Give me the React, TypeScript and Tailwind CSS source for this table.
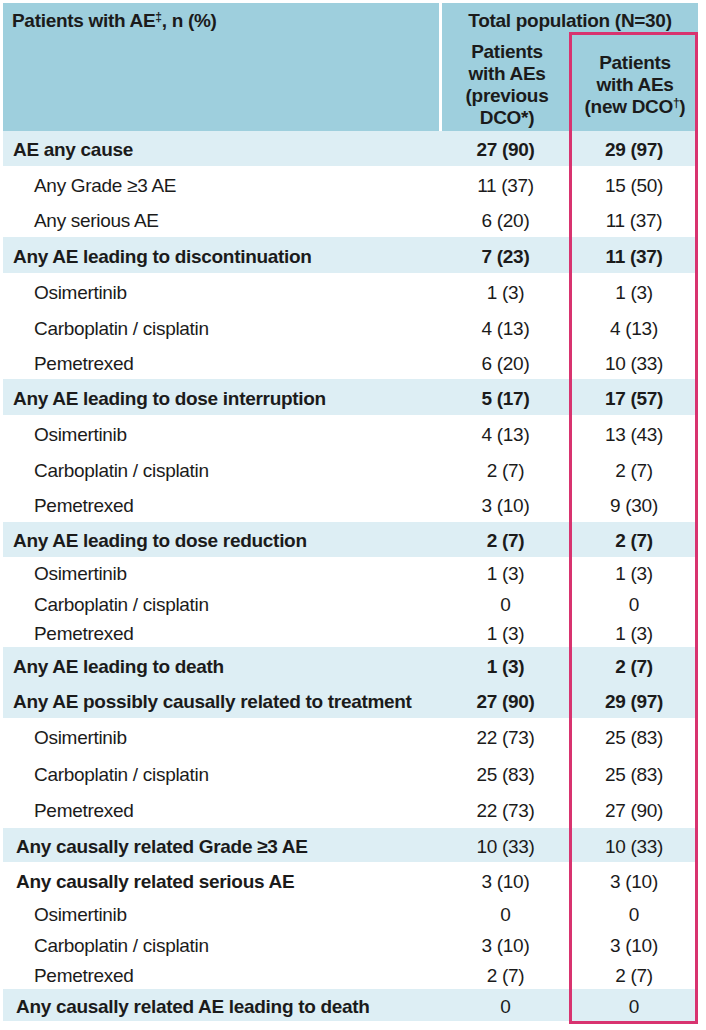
import React from "react";

type Row = {
  label: string;
  prev: string;
  next: string;
  h: number;
  kind: "main" | "causal" | "sub";
  band?: boolean;
  boldNums?: boolean;
};

const rows: Row[] = [
  { label: "AE any cause", prev: "27 (90)", next: "29 (97)", h: 35, kind: "main", band: true, boldNums: true },
  { label: "Any Grade ≥3 AE", prev: "11 (37)", next: "15 (50)", h: 36, kind: "sub" },
  { label: "Any serious AE", prev: "6 (20)", next: "11 (37)", h: 35, kind: "sub" },
  { label: "Any AE leading to discontinuation", prev: "7 (23)", next: "11 (37)", h: 36, kind: "main", band: true, boldNums: true },
  { label: "Osimertinib", prev: "1 (3)", next: "1 (3)", h: 37, kind: "sub" },
  { label: "Carboplatin / cisplatin", prev: "4 (13)", next: "4 (13)", h: 35, kind: "sub" },
  { label: "Pemetrexed", prev: "6 (20)", next: "10 (33)", h: 34, kind: "sub" },
  { label: "Any AE leading to dose interruption", prev: "5 (17)", next: "17 (57)", h: 36, kind: "main", band: true, boldNums: true },
  { label: "Osimertinib", prev: "4 (13)", next: "13 (43)", h: 37, kind: "sub" },
  { label: "Carboplatin / cisplatin", prev: "2 (7)", next: "2 (7)", h: 35, kind: "sub" },
  { label: "Pemetrexed", prev: "3 (10)", next: "9 (30)", h: 35, kind: "sub" },
  { label: "Any AE leading to dose reduction", prev: "2 (7)", next: "2 (7)", h: 35, kind: "main", band: true, boldNums: true },
  { label: "Osimertinib", prev: "1 (3)", next: "1 (3)", h: 31, kind: "sub" },
  { label: "Carboplatin / cisplatin", prev: "0", next: "0", h: 30, kind: "sub" },
  { label: "Pemetrexed", prev: "1 (3)", next: "1 (3)", h: 29, kind: "sub" },
  { label: "Any AE leading to death", prev: "1 (3)", next: "2 (7)", h: 36, kind: "main", band: true, boldNums: true },
  { label: "Any AE possibly causally related to treatment", prev: "27 (90)", next: "29 (97)", h: 35, kind: "main", band: true, boldNums: true },
  { label: "Osimertinib", prev: "22 (73)", next: "25 (83)", h: 37, kind: "sub" },
  { label: "Carboplatin / cisplatin", prev: "25 (83)", next: "25 (83)", h: 36, kind: "sub" },
  { label: "Pemetrexed", prev: "22 (73)", next: "27 (90)", h: 37, kind: "sub" },
  { label: "Any causally related Grade ≥3 AE", prev: "10 (33)", next: "10 (33)", h: 34, kind: "causal", band: true },
  { label: "Any causally related serious AE", prev: "3 (10)", next: "3 (10)", h: 36, kind: "causal" },
  { label: "Osimertinib", prev: "0", next: "0", h: 31, kind: "sub" },
  { label: "Carboplatin / cisplatin", prev: "3 (10)", next: "3 (10)", h: 30, kind: "sub" },
  { label: "Pemetrexed", prev: "2 (7)", next: "2 (7)", h: 30, kind: "sub" },
  { label: "Any causally related AE leading to death", prev: "0", next: "0", h: 32, kind: "causal", band: true },
];

function BodyRow({ row }: { row: Row }) {
  const labelPad = row.kind === "sub" ? "pl-[31px]" : row.kind === "causal" ? "pl-[13px]" : "pl-[10px]";
  return (
    <div
      className={`grid grid-cols-[438px_129px_128px] items-center pt-[3px] ${row.band ? "bg-[#ddeef4]" : "bg-white"}`}
      style={{ height: row.h }}
    >
      <span className={`${labelPad} ${row.kind === "sub" ? "font-normal" : "font-bold"} whitespace-nowrap`}>
        {row.label}
      </span>
      <span className={`text-center ${row.boldNums ? "font-bold" : ""}`}>{row.prev}</span>
      <span className={`text-center ${row.boldNums ? "font-bold" : ""}`}>{row.next}</span>
    </div>
  );
}

export default function App() {
  return (
    <div className="min-h-[1030px] w-[706px] bg-white pl-[3px] pt-[3px] font-['Liberation_Sans',Arial,sans-serif] text-[19px] leading-[22px] tracking-[-0.3px] text-[#1b1b1b]">
      <div className="relative w-[695px]">
        <div className="grid h-[128px] grid-cols-[436px_3px_256px] grid-rows-[31px_97px] bg-[#9ecfdd] font-bold">
          <div className="row-span-2 pl-[9px] pt-[7px]">
            Patients with AE<sup className="text-[12px]">‡</sup>, n (%)
          </div>
          <div className="row-span-2 bg-white" />
          <div className="pt-[7px] text-center">Total population (N=30)</div>
          <div className="grid grid-cols-[130px_126px] items-center pt-[5px] text-center">
            <div>
              Patients
              <br />
              with AEs
              <br />
              (previous
              <br />
              DCO*)
            </div>
            <div>
              Patients
              <br />
              with AEs
              <br />
              (new DCO<sup className="text-[12px]">†</sup>)
            </div>
          </div>
        </div>
        {rows.map((row, i) => (
          <BodyRow key={i} row={row} />
        ))}
        <div className="pointer-events-none absolute left-[566px] top-[29px] h-[992px] w-[129px] border-[3px] border-[#d8336f]" />
      </div>
    </div>
  );
}
